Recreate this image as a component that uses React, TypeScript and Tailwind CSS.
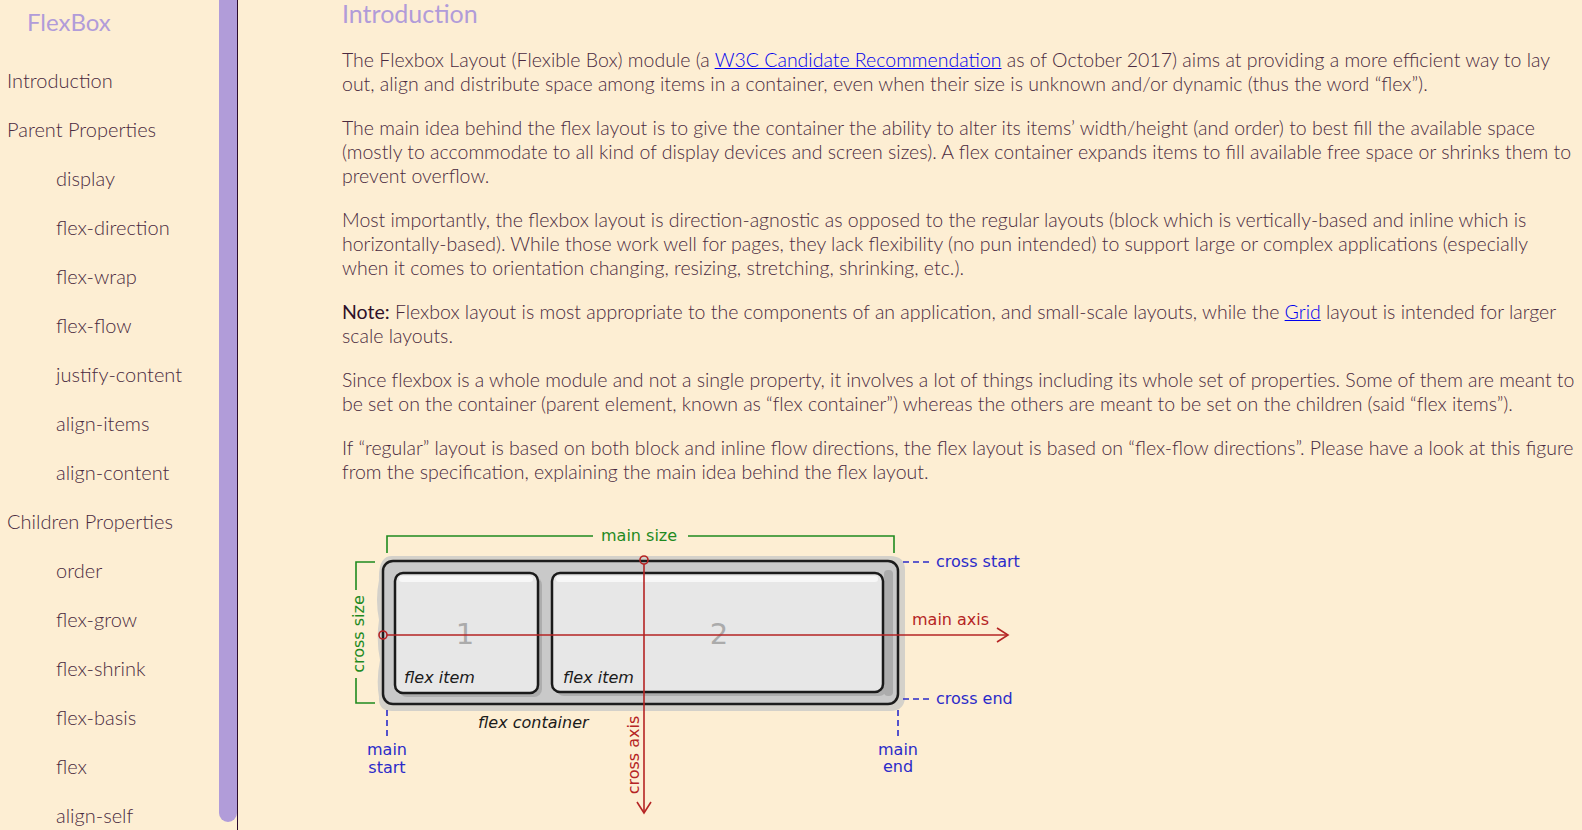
import React from "react";

const NAV = [
  { label: "Introduction", sub: false },
  { label: "Parent Properties", sub: false },
  { label: "display", sub: true },
  { label: "flex-direction", sub: true },
  { label: "flex-wrap", sub: true },
  { label: "flex-flow", sub: true },
  { label: "justify-content", sub: true },
  { label: "align-items", sub: true },
  { label: "align-content", sub: true },
  { label: "Children Properties", sub: false },
  { label: "order", sub: true },
  { label: "flex-grow", sub: true },
  { label: "flex-shrink", sub: true },
  { label: "flex-basis", sub: true },
  { label: "flex", sub: true },
  { label: "align-self", sub: true },
];

const GREEN = "#1f8a1f";
const BLUE = "#2b2bc9";
const RED = "#b52424";
const DIAGRAM_FONT = "'DejaVu Sans', 'Liberation Sans', sans-serif";

function Sidebar() {
  return (
    <aside className="flex h-full w-[238px] shrink-0 border-r border-[#2b0a2b]">
      <nav className="w-[219px] overflow-hidden">
        <div className="flex h-[44px] items-center pl-[27px] text-[24px] text-[#b19cd9]">FlexBox</div>
        <ul className="mt-[11px]">
          {NAV.map((item) => (
            <li
              key={item.label}
              className={`flex h-[49px] items-center text-[20px] font-light text-[#4a2a40] ${
                item.sub ? "pl-[56px]" : "pl-[7px]"
              }`}
            >
              {item.label}
            </li>
          ))}
        </ul>
      </nav>
      <div className="w-[18px]">
        <div className="h-[822px] rounded-b-[9px] bg-[#b19cd9]" />
      </div>
    </aside>
  );
}

function FlexDiagram() {
  return (
    <svg
      width="700"
      height="310"
      viewBox="340 510 700 310"
      className="-ml-[2px] mt-[26px] block"
      style={{ fontFamily: DIAGRAM_FONT }}
    >
      {/* soft shadow behind the container */}
      <path
        d="M392 556 H890 Q905 556 905 570 V696 Q905 711 890 711 H392 Q378 711 379 697 Q376 680 380 660 Q376 640 379 620 Q375 600 379 580 Q378 556 392 556 Z"
        fill="#d4d1ca"
      />

      {/* container */}
      <rect x="383" y="561" width="515" height="143" rx="10" fill="#c9c9c9" stroke="#1c1c1c" strokeWidth="2.5" />
      <rect x="884" y="570" width="9" height="126" rx="4" fill="#acacac" />

      {/* item shadows */}
      <rect x="399" y="577" width="143" height="120" rx="8" fill="#adadad" />
      <rect x="556" y="577" width="331" height="119" rx="8" fill="#adadad" />

      {/* items */}
      <rect x="395" y="573" width="143" height="120" rx="8" fill="#e7e7e7" stroke="#1a1a1a" strokeWidth="2.5" />
      <rect x="552" y="573" width="331" height="119" rx="8" fill="#e7e7e7" stroke="#1a1a1a" strokeWidth="2.5" />
      <rect x="399" y="576" width="134" height="6" rx="3" fill="#f7f7f7" />
      <rect x="556" y="576" width="322" height="6" rx="3" fill="#f7f7f7" />

      <text x="465" y="644" fontSize="29" fill="#ababab" textAnchor="middle">1</text>
      <text x="719" y="644" fontSize="29" fill="#ababab" textAnchor="middle">2</text>

      <text x="404" y="683" fontSize="16" fontStyle="italic" fill="#1a1a1a">flex item</text>
      <text x="563" y="683" fontSize="16" fontStyle="italic" fill="#1a1a1a">flex item</text>
      <text x="478" y="728" fontSize="16" fontStyle="italic" fill="#1a1a1a">flex container</text>

      {/* main size / cross size */}
      <g stroke={GREEN} strokeWidth="1.6" fill="none">
        <path d="M387 553 V536 H593" />
        <path d="M688 536 H894 V553" />
        <path d="M375 562 H356 V590" />
        <path d="M356 678 V703 H375" />
      </g>
      <text x="601" y="541" fontSize="16" fill={GREEN}>main size</text>
      <text transform="translate(364 634) rotate(-90)" fontSize="16" fill={GREEN} textAnchor="middle">
        cross size
      </text>

      {/* main axis / cross axis */}
      <g stroke={RED} strokeWidth="1.6" fill="none">
        <path d="M387 635 H1007" />
        <circle cx="383" cy="635" r="4" />
        <path d="M997 628 L1008 635 L997 642" />
        <path d="M644 564 V812" />
        <circle cx="644" cy="560" r="4" />
        <path d="M637 802 L644 813 L651 802" />
      </g>
      <text x="912" y="625" fontSize="16" fill={RED}>main axis</text>
      <text transform="translate(639 755) rotate(-90)" fontSize="16" fill={RED} textAnchor="middle">
        cross axis
      </text>

      {/* cross start / end, main start / end */}
      <g stroke={BLUE} strokeWidth="1.6" strokeDasharray="6 4" fill="none">
        <path d="M903 562 H933" />
        <path d="M903 699 H933" />
        <path d="M387 710 V740" />
        <path d="M898 710 V740" />
      </g>
      <text x="936" y="567" fontSize="16" fill={BLUE}>cross start</text>
      <text x="936" y="704" fontSize="16" fill={BLUE}>cross end</text>
      <text x="387" y="755" fontSize="16" fill={BLUE} textAnchor="middle">main</text>
      <text x="387" y="773" fontSize="16" fill={BLUE} textAnchor="middle">start</text>
      <text x="898" y="755" fontSize="16" fill={BLUE} textAnchor="middle">main</text>
      <text x="898" y="772" fontSize="16" fill={BLUE} textAnchor="middle">end</text>
    </svg>
  );
}

export default function App() {
  return (
    <div
      className="flex h-[830px] w-full overflow-hidden bg-[#fdeed3] text-[#4a2a40]"
      style={{ fontFamily: "Lato, 'Open Sans', sans-serif" }}
    >
      <Sidebar />
      <main className="min-w-0 flex-1 pl-[104px] pr-[4px]">
        <h2 className="h-[26px] text-[25px] leading-[26px] font-normal text-[#b19cd9]">Introduction</h2>
        <div className="mt-[22px] flex flex-col gap-[20px] text-[19.5px] leading-[24px] font-light">
          <p>
            The Flexbox Layout (Flexible Box) module (a{" "}
            <a href="#" className="text-[#0000ee] underline">W3C Candidate Recommendation</a> as of October 2017) aims at
            providing a more efficient way to lay out, align and distribute space among items in a container, even when
            their size is unknown and/or dynamic (thus the word “flex”).
          </p>
          <p>
            The main idea behind the flex layout is to give the container the ability to alter its items’ width/height
            (and order) to best fill the available space (mostly to accommodate to all kind of display devices and screen
            sizes). A flex container expands items to fill available free space or shrinks them to prevent overflow.
          </p>
          <p>
            Most importantly, the flexbox layout is direction-agnostic as opposed to the regular layouts (block which is
            vertically-based and inline which is horizontally-based). While those work well for pages, they lack
            flexibility (no pun intended) to support large or complex applications (especially when it comes to
            orientation changing, resizing, stretching, shrinking, etc.).
          </p>
          <p>
            <strong className="font-normal text-[#2e1028]">Note:</strong> Flexbox layout is most appropriate to the
            components of an application, and small-scale layouts, while the{" "}
            <a href="#" className="text-[#0000ee] underline">Grid</a> layout is intended for larger scale layouts.
          </p>
          <p className="tracking-[-0.04px]">
            Since flexbox is a whole module and not a single property, it involves a lot of things including its whole
            set of properties. Some of them are meant to be set on the container (parent element, known as “flex
            container”) whereas the others are meant to be set on the children (said “flex items”).
          </p>
          <p>
            If “regular” layout is based on both block and inline flow directions, the flex layout is based on “flex-flow
            directions”. Please have a look at this figure from the specification, explaining the main idea behind the
            flex layout.
          </p>
        </div>
        <FlexDiagram />
      </main>
    </div>
  );
}
